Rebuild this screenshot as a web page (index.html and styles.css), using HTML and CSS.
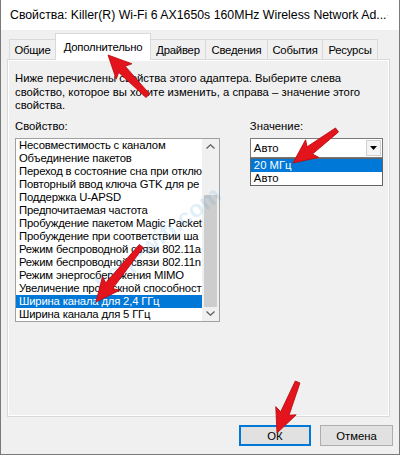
FILE: index.html
```html
<!DOCTYPE html>
<html lang="ru">
<head>
    <meta charset="UTF-8">
    <title>Свойства адаптера</title>
    <link rel="stylesheet" href="styles.css">
</head>
<body>
    <div class="window">
        <div class="titlebar">
            <span class="title">Свойства: Killer(R) Wi-Fi 6 AX1650s 160MHz Wireless Network Ad...</span>
            <svg class="close" viewBox="0 0 11 11" width="11" height="11">
                <path d="M0.5 0.5 L10.5 10.5 M10.5 0.5 L0.5 10.5" stroke="#000" stroke-width="1.1" fill="none"/>
            </svg>
        </div>

        <div class="tabs">
            <div class="tab tab-general">Общие</div>
            <div class="tab tab-advanced active">Дополнительно</div>
            <div class="tab tab-driver">Драйвер</div>
            <div class="tab tab-details">Сведения</div>
            <div class="tab tab-events">События</div>
            <div class="tab tab-resources">Ресурсы</div>
        </div>

        <div class="panel">
            <p class="desc">Ниже перечислены свойства этого адаптера. Выберите слева<br>свойство, которое вы хотите изменить, а справа – значение этого<br>свойства.</p>

            <div class="fields">
                <div class="prop">
                    <div class="label">Свойство:</div>
                    <div class="listbox">
                        <ul class="items">
                            <li>Несовместимость с каналом</li>
                            <li>Объединение пакетов</li>
                            <li>Переход в состояние сна при отклю</li>
                            <li>Повторный ввод ключа GTK для ре</li>
                            <li>Поддержка U-APSD</li>
                            <li>Предпочитаемая частота</li>
                            <li>Пробуждение пакетом Magic Packet</li>
                            <li>Пробуждение при соответствии ша</li>
                            <li>Режим беспроводной связи 802.11a</li>
                            <li>Режим беспроводной связи 802.11n</li>
                            <li>Режим энергосбережения MIMO</li>
                            <li>Увеличение пропускной способност</li>
                            <li class="selected">Ширина канала для 2,4 ГГц</li>
                            <li>Ширина канала для 5 ГГц</li>
                        </ul>
                        <div class="scrollbar">
                            <div class="sb-btn">
                                <svg viewBox="0 0 9 5" width="9" height="5"><path d="M0.5 4.5 L4.5 0.8 L8.5 4.5" stroke="#606060" stroke-width="1.3" fill="none"/></svg>
                            </div>
                            <div class="sb-track"><div class="sb-thumb"></div></div>
                            <div class="sb-btn">
                                <svg viewBox="0 0 9 5" width="9" height="5"><path d="M0.5 0.5 L4.5 4.2 L8.5 0.5" stroke="#606060" stroke-width="1.3" fill="none"/></svg>
                            </div>
                        </div>
                    </div>
                </div>

                <div class="value">
                    <div class="label">Значение:</div>
                    <div class="combo">
                        <span class="combo-text">Авто</span>
                        <span class="combo-btn">
                            <svg viewBox="0 0 7 4" width="7" height="4"><path d="M0 0 H7 L3.5 4 Z" fill="#000"/></svg>
                        </span>
                    </div>
                    <ul class="dropdown">
                        <li class="selected">20 МГц</li>
                        <li>Авто</li>
                    </ul>
                </div>
            </div>
        </div>

        <div class="buttons">
            <button class="btn default" type="button">ОК</button>
            <button class="btn" type="button">Отмена</button>
        </div>

        <div class="watermark">help-wifi.com</div>

        <!-- red pointer arrows drawn on top of the dialog -->
        <svg class="marks" viewBox="0 0 400 455" width="400" height="455">
            <defs>
                <polygon id="arrow-s" points="0,0 23,-11 20,-4.5 57,-2.5 57,2.5 20,4.5 23,11"/>
                <polygon id="arrow-m" points="0,0 24,-11 21,-4.5 55,-2.5 55,2.5 21,4.5 24,11"/>
                <polygon id="arrow-l" points="0,0 24,-11 21,-4.5 72,-2.5 72,2.5 21,4.5 24,11"/>
            </defs>
            <g class="arrow">
                <use href="#arrow-s" transform="translate(107 55) rotate(45.7)"/>
                <use href="#arrow-m" transform="translate(292 163) rotate(-36.9)"/>
                <use href="#arrow-l" transform="translate(95 302) rotate(-51)"/>
                <use href="#arrow-m" transform="translate(276 433) rotate(-68)"/>
            </g>
        </svg>
    </div>
</body>
</html>
```

FILE: styles.css
```css
body {
    margin: 0;
    font-family: "Liberation Sans", Arial, sans-serif;
    font-size: 11.3px;
    color: #000;
    background-color: #fff;
}

ul {
    list-style: none;
    margin: 0;
    padding: 0;
}

.window {
    position: relative;
    width: 400px;
    height: 455px;
    box-sizing: border-box;
    background-color: #f0f0f0;
    border: 1px solid #7a7a7a;
    border-top: none;
    overflow: hidden;
}

/* title bar */
.titlebar {
    height: 30px;
    background-color: #fff;
    display: flex;
    align-items: center;
    justify-content: space-between;
    padding: 0 11px 0 9px;
}

.title {
    font-size: 12.3px;
    white-space: nowrap;
}

/* tab strip */
.tabs {
    display: flex;
    align-items: flex-end;
    height: 29px;
    padding-left: 8px;
}

.tab {
    height: 20px;
    line-height: 20px;
    box-sizing: border-box;
    border: 1px solid #d9d9d9;
    border-bottom: none;
    background-color: #f0f0f0;
    margin-right: -1px;
    text-align: center;
    letter-spacing: -0.2px;
    white-space: nowrap;
}

.tab-general { width: 47px; }
.tab-advanced { width: 96px; }
.tab-driver { width: 56px; }
.tab-details { width: 63px; }
.tab-events { width: 56px; }
.tab-resources { width: 56px; }

.tab.active {
    height: 27px;
    line-height: 26px;
    margin-bottom: -1px;
    background-color: #fff;
    position: relative;
    z-index: 1;
}

/* tab page */
.panel {
    margin: 0 9px 0 6px;
    height: 358px;
    box-sizing: border-box;
    border: 1px solid #d9d9d9;
    box-shadow: inset 1px 1px 0 #fff, inset -1px -1px 0 #fff;
    background-color: #f0f0f0;
    padding: 12px 6px 0 7px;
}

.desc {
    margin: 0;
    line-height: 13.5px;
    white-space: nowrap;
}

.fields {
    display: flex;
    margin-top: 7px;
}

.label {
    line-height: 13.5px;
    margin-bottom: 5px;
}

.prop {
    width: 205px;
}

.listbox {
    display: flex;
    height: 184px;
    box-sizing: border-box;
    border: 1px solid #a0a0a0;
    background-color: #fff;
}

.items {
    flex: 1;
    min-width: 0;
    overflow: hidden;
}

.items li {
    height: 13px;
    line-height: 13px;
    padding-left: 3px;
    letter-spacing: -0.18px;
    white-space: nowrap;
    overflow: hidden;
}

.items li.selected,
.dropdown li.selected {
    background-color: #0078d7;
    color: #fff;
}

.scrollbar {
    width: 17px;
    display: flex;
    flex-direction: column;
    background-color: #f0f0f0;
}

.sb-btn {
    height: 17px;
    display: flex;
    align-items: center;
    justify-content: center;
}

.sb-track {
    flex: 1;
}

.sb-thumb {
    margin: 41px 2px 0;
    height: 112px;
    background-color: #cdcdcd;
}

/* value column */
.value {
    width: 136px;
    margin-left: 30px;
}

.combo {
    display: flex;
    align-items: center;
    height: 20px;
    box-sizing: border-box;
    border: 1px solid #7a7a7a;
    background-color: #fff;
}

.combo-text {
    flex: 1;
    padding-left: 3px;
}

.combo-btn {
    width: 15px;
    height: 16px;
    margin-right: 1px;
    display: flex;
    align-items: center;
    justify-content: center;
    border: 1px solid #cfcfcf;
    box-sizing: border-box;
    background-color: #f4f4f4;
}

.dropdown {
    border: 1px solid #646464;
    background-color: #fff;
}

.dropdown li {
    height: 13px;
    line-height: 13px;
    padding-left: 3px;
}

/* dialog buttons */
.buttons {
    display: flex;
    justify-content: flex-end;
    gap: 9px;
    padding: 8px 6px 0 0;
}

.btn {
    width: 73px;
    height: 21px;
    padding: 0;
    font-family: inherit;
    font-size: 11.3px;
    color: #000;
    background-color: #e1e1e1;
    border: 1px solid #adadad;
}

.btn.default {
    width: 72px;
    border: 2px solid #0078d7;
}

.watermark {
    position: absolute;
    left: 96px;
    top: 272px;
    font-size: 24px;
    font-weight: bold;
    color: rgba(60, 160, 225, 0.16);
    transform: rotate(-38deg);
    transform-origin: left center;
    white-space: nowrap;
}

.marks {
    position: absolute;
    left: 0;
    top: 0;
    pointer-events: none;
    z-index: 5;
}

.arrow {
    fill: #e3141b;
    stroke: #b80c12;
    stroke-width: 0.8;
    stroke-linejoin: round;
}
```
